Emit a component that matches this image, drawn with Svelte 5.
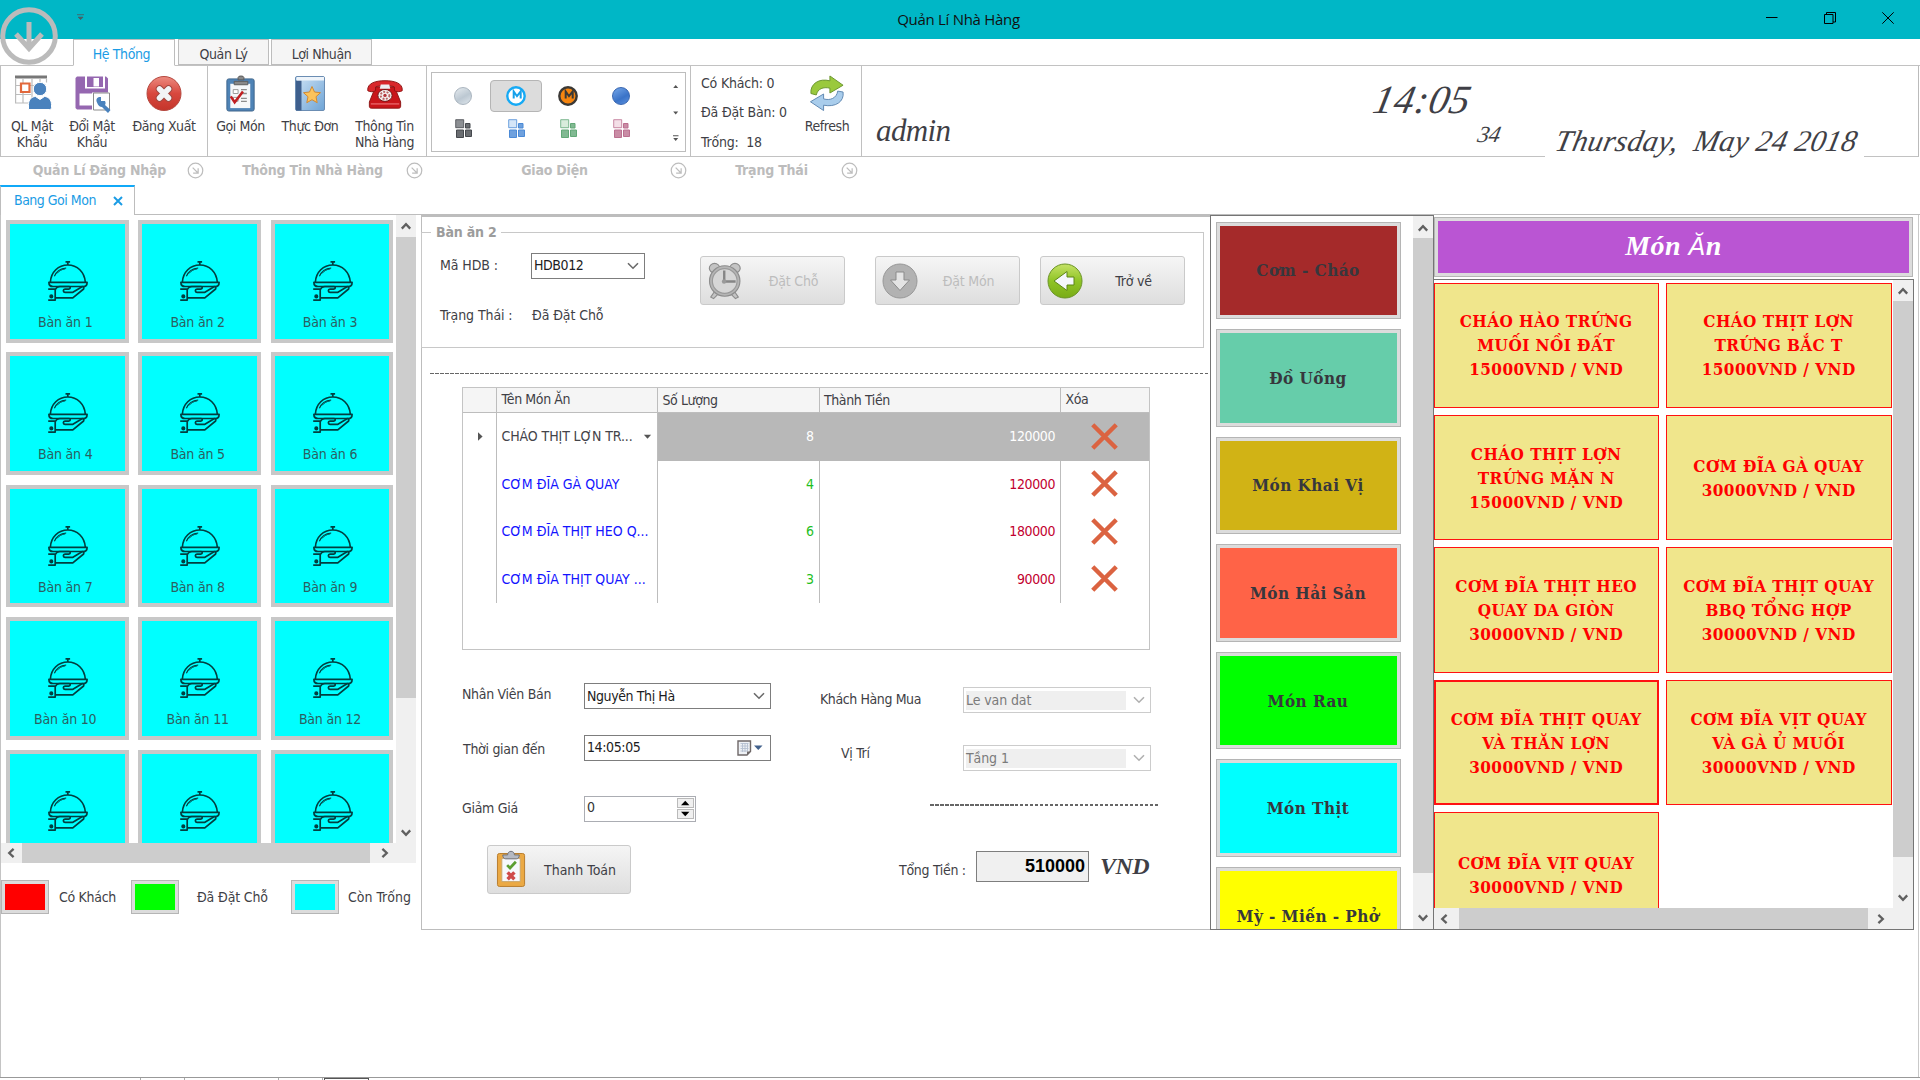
<script>
  // Tiles of the fifth row are only partly in view, so they carry no caption.
  const tables = Array.from({ length: 15 }, (_, i) => ({ n: i + 1, captioned: i < 12 }));

  const legend = [
    { tone: 'busy', label: 'Có Khách' },
    { tone: 'booked', label: 'Đã Đặt Chỗ' },
    { tone: 'free', label: 'Còn Trống' }
  ];

  const rows = [
    { name: 'CHÁO THỊT LỢN TR...', qty: 8, total: 120000, selected: true },
    { name: 'CƠM ĐĨA GÀ QUAY', qty: 4, total: 120000 },
    { name: 'CƠM ĐĨA THỊT HEO Q...', qty: 6, total: 180000 },
    { name: 'CƠM ĐĨA THỊT QUAY ...', qty: 3, total: 90000 }
  ];

  const categories = [
    { name: 'Cơm - Cháo', tone: 'brown' },
    { name: 'Đồ Uống', tone: 'mint' },
    { name: 'Món Khai Vị', tone: 'gold' },
    { name: 'Món Hải Sản', tone: 'tomato' },
    { name: 'Món Rau', tone: 'lime' },
    { name: 'Món Thịt', tone: 'aqua' },
    { name: 'Mỳ - Miến - Phở', tone: 'yellow' }
  ];

  const dishes = [
    { lines: ['CHÁO HÀO TRỨNG', 'MUỐI NỒI ĐẤT', '15000VND / VND'] },
    { lines: ['CHÁO THỊT LỢN', 'TRỨNG BẮC T', '15000VND / VND'] },
    { lines: ['CHÁO THỊT LỢN', 'TRỨNG MẶN N', '15000VND / VND'] },
    { lines: ['CƠM ĐĨA GÀ QUAY', '30000VND / VND'] },
    { lines: ['CƠM ĐĨA THỊT HEO', 'QUAY DA GIÒN', '30000VND / VND'] },
    { lines: ['CƠM ĐĨA THỊT QUAY', 'BBQ TỔNG HỢP', '30000VND / VND'] },
    { lines: ['CƠM ĐĨA THỊT QUAY', 'VÀ THĂN LỢN', '30000VND / VND'], focused: true },
    { lines: ['CƠM ĐĨA VỊT QUAY', 'VÀ GÀ Ủ MUỐI', '30000VND / VND'] },
    { lines: ['CƠM ĐĨA VỊT QUAY', '30000VND / VND'] }
  ];

  const palettes = [
    ['#8c8f93', '#45484d'],
    ['#d5e6f8', '#4b8ad6'],
    ['#d9ecdc', '#62a877'],
    ['#f3dfe7', '#bb6f8f']
  ];
</script>

{#snippet chevron(dir)}
  <svg class="chev {dir}" viewBox="0 0 12 12"><path d="M1.8 8.6 6 4.2l4.2 4.4" /></svg>
{/snippet}

{#snippet comboArrow()}
  <svg class="combo-arrow" viewBox="0 0 12 8"><path d="M1 1.2 6 6.2 11 1.2" /></svg>
{/snippet}

{#snippet launcher()}
  <svg class="launcher" viewBox="0 0 18 18">
    <circle cx="9" cy="9" r="7.7" />
    <path d="M6 6l5.4 5.4M11.8 6.5v5.3H6.5" />
  </svg>
{/snippet}

{#snippet dishIcon()}
  <svg class="serve" viewBox="0 0 40 40">
    <path d="M17.5.9h4.6M19.8 1v3" />
    <path d="M2.4 21C3 11 10.300 4 19.800 4S36.500 11 37.300 21" />
    <path d="M6.400 15.300C8.300 10.600 12.600 7.400 18.200 7" stroke-width="1.1" />
    <path d="M8.800 12.600c2-2.500 5-4.300 8.500-4.700" stroke-width=".9" />
    <path d="M.9 21.400h38.200c0 2.700-1.700 4.100-4.100 4.100H5C2.600 25.500.9 24.100.9 21.400z" />
    <path d="M.2 28.100h7v11h-7M7.200 36.800h17.600L35.600 28c.8-1.700-.1-2.600-1.600-2.300l-9.500 5.700h-7.500c-2.200-.2-2.200-3.200 0-3.300h3.700c2-.3 2.100-2.200.4-2.600H11.800c-2.200.2-3.700 1.300-4.600 3.200" />
    <circle cx="3.300" cy="35.400" r="1.200" />
  </svg>
{/snippet}

<div class="app">
  <header class="titlebar">
    <svg class="quick" viewBox="0 0 8 7"><path d="M0 .7h7M1.200 3.200h4.800L3.600 5.600z" /></svg>
    <span class="window-title">Quản Lí Nhà Hàng</span>
    <div class="window-buttons">
      <svg viewBox="0 0 12 12"><path d="M0 5.500h11.500" /></svg>
      <svg viewBox="0 0 12 12"><path d="M.5 2.500h8.500v9H.5zM2.500 2.500V.5h9v9.500H9" /></svg>
      <svg viewBox="0 0 12 12"><path d="M.3.3l11.400 11.400M11.700.3.3 11.700" /></svg>
    </div>
  </header>
  <svg class="app-button" viewBox="0 0 58 58">
    <circle cx="29" cy="29" r="26.300" />
    <path d="M29 15v27M16 27l13 14.500L42 27" />
  </svg>

  <nav class="tabs">
    <span class="tab active">Hệ Thống</span>
    <span class="tab second">Quản Lý</span>
    <span class="tab third">Lợi Nhuận</span>
  </nav>

  <section class="ribbon">
    <div class="group login">
      <div class="body">
        <button>
          <svg viewBox="0 0 36 36">
            <path d="M0 0h32v3H0z" fill="#777" />
            <path d="M.6 3v25M8 3v24M17 3v24M25 3v6M0 10h31M0 19h16M0 27.500h15M31.500 3v4" stroke="#bcbcbc" stroke-width="1.200" fill="none" />
            <path d="M6 8h8.500v8.500H6z" fill="#fff" stroke="#e2683c" stroke-width="2.200" />
            <circle cx="25" cy="13.500" r="6.700" fill="#4a82bd" stroke="#fff" />
            <path d="M13.500 34v-5c0-5 3.500-8 7-8l4.500 3 4.500-3c3.500 0 7 3 7 8v3c0 1.500-1 2-2 2z" fill="#4a82bd" stroke="#fff" />
          </svg>
          <span>QL Mật<br />Khẩu</span>
        </button>
        <button>
          <svg viewBox="0 0 36 36">
            <path d="M2 1h8v12h20V1h1l2 2v14H17v17H2L.5 32.500V2.500z" fill="#9567b0" />
            <path d="M12 1h16v10.500H12z" fill="#9567b0" />
            <path d="M18.500 2.500H24v8.500h-5.500z" fill="#fff" />
            <path d="M4.500 18h13v12h-13z" fill="#fff" />
            <path d="M18.500 17.500h16v17h-16z" fill="#fff" stroke="#8b8b8b" />
            <path d="M22 27c-1.500-3 0-6 4-5.500v4h4c1 2 .5 3 0 4l5.500 5-2.500 3-6-6c-2 0-4-1.500-5-4.500z" fill="#4a82bd" />
          </svg>
          <span>Đổi Mật<br />Khẩu</span>
        </button>
        <button>
          <svg viewBox="0 0 36 36">
            <defs>
              <linearGradient id="redball" x1="0" y1="0" x2="0" y2="1">
                <stop offset="0" stop-color="#ec8b80" /><stop offset=".5" stop-color="#d8483e" /><stop offset="1" stop-color="#c4352b" />
              </linearGradient>
            </defs>
            <circle cx="18" cy="18" r="17" fill="url(#redball)" stroke="#b5483f" />
            <path d="M13.500 13.500l9 9M22.500 13.500l-9 9" stroke="#a04840" stroke-width="7.500" stroke-linecap="round" />
            <path d="M13.500 13.500l9 9M22.500 13.500l-9 9" stroke="#f2f4f6" stroke-width="5.500" stroke-linecap="round" />
          </svg>
          <span>Đăng Xuất</span>
        </button>
      </div>
      <footer><b>Quản Lí Đăng Nhập</b>{@render launcher()}</footer>
    </div>

    <div class="group info">
      <div class="body">
        <button>
          <svg viewBox="0 0 36 38">
            <rect x="3.500" y="4" width="28" height="33" rx="2" fill="#4e83b6" stroke="#40668c" />
            <path d="M7 9h20.500v25H7z" fill="#f5f7f9" />
            <path d="M11 6.500h14v3.500H11zM15 5V2.500c0-2 6-2 6 0V5z" fill="#888" stroke="#5c5c5c" />
            <path d="M10 15h5v4h-5zM10 23h5v4h-5z" fill="#fff" stroke="#999" />
            <path d="M18 15h6M18 19h6M18 24h6M18 27h6" stroke="#8c8c8c" stroke-width="1.300" />
            <path d="M7.500 22l4 6L20 17" fill="none" stroke="#c01f22" stroke-width="2.600" />
          </svg>
          <span>Gọi Món</span>
        </button>
        <button>
          <svg viewBox="0 0 36 36">
            <defs>
              <linearGradient id="book" x1="0" y1="0" x2="1" y2="1">
                <stop offset="0" stop-color="#cfe3f5" /><stop offset="1" stop-color="#6ea4d6" />
              </linearGradient>
            </defs>
            <rect x="3.500" y="1" width="29" height="34" rx="1.500" fill="url(#book)" stroke="#6b8db3" />
            <path d="M4 5h5.500v30H4z" fill="#3e5f8d" />
            <path d="M5 1.500h27V5H5z" fill="#eef4fa" />
            <path d="M20 11l2.500 5.500 6 .7-4.500 4 1.200 6-5.200-3-5.200 3 1.200-6-4.500-4 6-.7z" fill="#fcc35c" stroke="#d08a34" />
          </svg>
          <span>Thực Đơn</span>
        </button>
        <button>
          <svg viewBox="0 0 38 36">
            <path d="M9 11h20l6.500 16v4.500c0 1.500-1 2-2 2h-29c-1 0-2-.5-2-2V27z" fill="#c9151a" stroke="#8c1414" />
            <path d="M.8 15C0 7 9 4.500 19 4.500S38 7 37.200 15c-2 1.500-6.500 1.500-8.200 0v-4c-3-1.500-17-1.500-20 0v4c-1.700 1.500-6.200 1.500-8.200 0z" fill="#d9272b" stroke="#8c1414" />
            <path d="M14.500 8.500h9l1 4.500h-11z" fill="#eceff2" />
            <ellipse cx="19" cy="20" rx="7.500" ry="6.300" fill="#f3f0f0" stroke="#701616" />
            <ellipse cx="19" cy="20" rx="4.600" ry="3.800" fill="none" stroke="#b66" stroke-width="2" stroke-dasharray="2 1.500" />
            <circle cx="19" cy="20" r="1.800" fill="#b4353a" />
            <path d="M4 29h30" stroke="#ef7577" stroke-width="1.200" />
          </svg>
          <span>Thông Tin<br />Nhà Hàng</span>
        </button>
      </div>
      <footer><b>Thông Tin Nhà Hàng</b>{@render launcher()}</footer>
    </div>

    <div class="group look">
      <div class="body">
        <div class="gallery">
          <div class="swatches">
            <span class="swatch"><i class="ball silver"></i></span>
            <span class="swatch chosen"><svg viewBox="0 0 20 20"><circle cx="10" cy="10" r="8.700" fill="#fff" stroke="#16aaf5" stroke-width="2.400" /><path d="M7.700 12.500V5.500l3.300 4.700 3.700-4.700v7" fill="none" stroke="#16a0ea" stroke-width="2" /></svg></span>
            <span class="swatch"><svg viewBox="0 0 20 20"><circle cx="10" cy="10" r="8.700" fill="#f6850f" stroke="#3b3936" stroke-width="2.400" /><path d="M7.700 12.500V5.500l3.300 4.700 3.700-4.700v7" fill="none" stroke="#3b3936" stroke-width="2" /></svg></span>
            <span class="swatch"><i class="ball blue"></i></span>
            {#each palettes as [light, dark]}
              <span class="swatch low">
                <svg viewBox="0 0 18 20">
                  <path d="M.7.7h8v8h-8z" fill={light} stroke={dark} stroke-width=".8" />
                  <path d="M10.500 4.500h4.500V9h-4.500zM1.500 11h7v7.500h-7zM10.500 11H16.500v6.500h-6z" fill={dark} stroke={dark} fill-opacity=".8" />
                </svg>
              </span>
            {/each}
          </div>
          <svg class="pager" viewBox="0 0 8 60">
            <path d="M1.200 5h5L3.700 2zM1.200 28.500h5l-2.500 3zM1.200 55h5l-2.500 3zM1 52.300h5.500v1H1z" />
          </svg>
        </div>
      </div>
      <footer><b>Giao Diện</b>{@render launcher()}</footer>
    </div>

    <div class="group state">
      <div class="body">
        <ul>
          <li>Có Khách: 0</li>
          <li>Đã Đặt Bàn: 0</li>
          <li>Trống:&nbsp; 18</li>
        </ul>
        <button>
          <svg viewBox="0 0 36 38">
            <path d="M1.500 19C.5 9 10 3 21 6V1l13.500 9.500L21 18.500v-5C14 12 8.500 14 7 20.500z" fill="#9ac93d" stroke="#6b9630" />
            <path d="M34.500 17.500c1.500 10-8 16-20 13.500v5.500L1 27.500l13.500-8v5C21 26.500 28 24 29 16.500z" fill="#a9cdec" stroke="#6189b2" />
          </svg>
          <span>Refresh</span>
        </button>
      </div>
      <footer><b>Trạng Thái</b>{@render launcher()}</footer>
    </div>

    <div class="group clock">
      <div class="body">
        <span class="user">admin</span>
        <span class="time"><span>14:05</span></span>
        <span class="seconds"><span>34</span></span>
        <span class="date"><span>Thursday,&nbsp; May 24 2018</span></span>
      </div>
      <footer></footer>
    </div>
  </section>

  <div class="doc-tabs">
    <span class="doc-tab">Bang Goi Mon
      <svg viewBox="0 0 10 10"><path d="M1 1l8 8M9 1 1 9" /></svg>
    </span>
  </div>

  <main>
    <section class="floor">
      <div class="floor-view">
        <div class="table-grid">
          {#each tables as table}
            <button class="table-tile">
              {@render dishIcon()}
              {#if table.captioned}<span>Bàn ăn {table.n}</span>{/if}
            </button>
          {/each}
        </div>
        <div class="vbar floor-v">
          {@render chevron('up')}
          <i></i>
          {@render chevron('down')}
        </div>
        <div class="hbar floor-h">
          {@render chevron('left')}
          <i></i>
          {@render chevron('right')}
        </div>
        <div class="bar-corner"></div>
      </div>
      <div class="legend">
        {#each legend as item}
          <span class="key {item.tone}"></span>
          <span class="key-label">{item.label}</span>
        {/each}
      </div>
    </section>

    <section class="order">
      <fieldset>
        <legend>Bàn ăn 2</legend>
        <dl>
          <dt>Mã HDB :</dt>
          <dd><div class="combo">HDB012{@render comboArrow()}</div></dd>
          <dt>Trạng Thái :</dt>
          <dd class="plain">Đã Đặt Chỗ</dd>
        </dl>
        <div class="actions">
          <button class="btn off">
            <svg viewBox="0 0 36 40">
              <g fill="#c4c4c4" stroke="#8d8d8d" stroke-width="1.200">
                <path d="M7 31l-4 6 3 1.500 5-5zM28 31l4 6-3 1.500-5-5z" />
                <ellipse cx="7" cy="6.500" rx="5.500" ry="5" /><ellipse cx="28.500" cy="6.500" rx="5.500" ry="5" />
                <circle cx="17.700" cy="20" r="16" fill="#b5b5b5" /><circle cx="17.700" cy="20" r="13" fill="#d6d6d6" stroke="#9a9a9a" />
              </g>
              <path d="M17.200 9v11.500h12" fill="none" stroke="#858585" stroke-width="2.500" /><circle cx="17" cy="20.500" r="2.300" fill="#999" />
            </svg>
            <span>Đặt Chỗ</span>
          </button>
          <button class="btn off mid">
            <svg viewBox="0 0 36 36">
              <circle cx="18" cy="18" r="17" fill="#b2b2b2" stroke="#989898" />
              <path d="M14 9h8v8h5.500L18 27.500 8.500 17H14z" fill="#e4e4e4" stroke="#8b8b8b" />
            </svg>
            <span>Đặt Món</span>
          </button>
          <button class="btn last">
            <svg viewBox="0 0 36 36">
              <defs>
                <linearGradient id="green" x1="0" y1="0" x2="0" y2="1">
                  <stop offset="0" stop-color="#c5e267" /><stop offset=".5" stop-color="#8fc425" /><stop offset="1" stop-color="#79ac17" />
                </linearGradient>
              </defs>
              <circle cx="18" cy="18" r="17" fill="url(#green)" stroke="#6b9428" />
              <path d="M27 14v8h-7v5.500L7 18 20 8.500V14z" fill="#f4f7fb" stroke="#5c8615" />
            </svg>
            <span>Trở về</span>
          </button>
        </div>
      </fieldset>

      <div class="dashes wide"></div>

      <div class="grid">
        <div class="row head">
          <span></span><span>Tên Món Ăn</span><span class="low">Số Lượng</span><span class="low">Thành Tiền</span><span>Xóa</span>
        </div>
        {#each rows as row}
          <div class="row" class:selected={row.selected}>
            <span class="mark">{#if row.selected}<svg viewBox="0 0 6 10"><path d="M0 0v10l5.500-5z" /></svg>{/if}</span>
            <span class="name">{row.name}{#if row.selected}<svg viewBox="0 0 10 6"><path d="M1 .5h8L5 5z" /></svg>{/if}</span>
            <span class="qty">{row.qty}</span>
            <span class="sum">{row.total}</span>
            <span class="del"><svg viewBox="0 0 28 28"><path d="M1.800 1.800 26.200 26.200M26.200 1.800 1.800 26.200" /></svg></span>
          </div>
        {/each}
      </div>

      <div class="forms">
        <div class="form-left">
          <div class="field seller">
            <span class="caption">Nhân Viên Bán</span>
            <div class="combo">Nguyễn Thị Hà{@render comboArrow()}</div>
          </div>
          <div class="field arrival">
            <span class="caption">Thời gian đến</span>
            <div class="combo">14:05:05
              <svg class="calendar" viewBox="0 0 26 16">
                <path d="M1 1h12.500v10.500l-3.500 3.500H1z" fill="#eef1f5" stroke="#6f6868" stroke-width="1.400" />
                <path d="M3.500 3.500h8M3.500 6h8M3.500 8.500h8M3.500 11h7M5.500 3v9M8 3v9M10.500 3v8" stroke="#b4bfd0" stroke-width=".9" />
                <path d="M10 15v-3.500h3.500z" fill="#706a6a" />
                <path d="M17 5.500h8.500L21.300 10z" fill="#42618c" />
              </svg>
            </div>
          </div>
          <div class="field discount">
            <span class="caption">Giảm Giá</span>
            <div class="spin">0
              <div class="spinner">
                <svg viewBox="0 0 8 5"><path d="M0 4.500h7.500L3.800.5z" /></svg>
                <svg viewBox="0 0 8 5"><path d="M0 .5h7.500L3.800 4.500z" /></svg>
              </div>
            </div>
          </div>
          <button class="btn pay">
            <svg viewBox="0 0 32 38">
              <rect x="1.500" y="3" width="28" height="34" rx="2" fill="#eba944" stroke="#b77c2c" />
              <path d="M6 8h19v24H6z" fill="#f6f8fc" stroke="#c9a56a" />
              <path d="M7 4.500h5c0-5 7-5 7 0h5c0 3-1.500 4-3 4H10c-1.500 0-3-1-3-4z" fill="#b5b9c2" stroke="#6e727a" />
              <path d="M11.500 15l3 3 6-6.500" fill="none" stroke="#5b9e32" stroke-width="2.800" />
              <path d="M12 22.500l7 7M19 22.500l-7 7" stroke="#cf4a4a" stroke-width="3.600" />
            </svg>
            <span>Thanh Toán</span>
          </button>
        </div>

        <div class="form-right">
          <div class="field customer">
            <span class="caption">Khách Hàng Mua</span>
            <div class="combo locked"><span>Le van dat</span>{@render comboArrow()}</div>
          </div>
          <div class="field place">
            <span class="caption">Vị Trí</span>
            <div class="combo locked"><span>Tầng 1</span>{@render comboArrow()}</div>
          </div>
          <div class="dashes short"></div>
          <div class="field total">
            <span class="caption">Tổng Tiền :</span>
            <output>510000</output>
            <em>VND</em>
          </div>
        </div>
      </div>
    </section>

    <section class="categories">
      <div class="cat-list">
        {#each categories as cat}
          <button class="cat {cat.tone}">{cat.name}</button>
        {/each}
      </div>
      <div class="vbar cat-v">
        {@render chevron('up')}
        <i></i>
        {@render chevron('down')}
      </div>
    </section>

    <section class="menu">
      <h2>Món <span>Ă</span>n</h2>
      <div class="menu-view">
        <div class="dishes">
          {#each dishes as dish}
            <button class="dish" class:focused={dish.focused}>
              {#each dish.lines as line}<span>{line}</span>{/each}
            </button>
          {/each}
        </div>
        <div class="vbar menu-v">
          {@render chevron('up')}
          <i></i>
          {@render chevron('down')}
        </div>
        <div class="hbar menu-h">
          {@render chevron('left')}
          <i></i>
          {@render chevron('right')}
        </div>
        <div class="bar-corner"></div>
      </div>
    </section>
  </main>

  <footer class="bottom"><i class="b1"></i><i class="b2"></i><i class="b3"></i></footer>
</div>

<style>
  :global(body) { background: #fff; overflow: hidden; }
  * { box-sizing: border-box; }
  .app {
    position: relative;
    display: flex;
    flex-direction: column;
    width: 1920px;
    height: 1080px;
    overflow: hidden;
    background: #fff;
    color: #3f3f46;
    font: 14px/17px "DejaVu Sans Condensed", "DejaVu Sans", sans-serif;
    letter-spacing: -0.400px;
    white-space: nowrap;
  }
  button { font: inherit; letter-spacing: inherit; color: inherit; border: 0; margin: 0; padding: 0; background: none; }
  svg { display: block; flex: none; overflow: visible; }

  .titlebar { display: grid; grid-template-columns: 1fr auto 1fr; align-items: center; height: 38.500px; background: #00b7c6; color: #111; }
  .quick { width: 8px; height: 7px; margin-left: 77px; margin-top: -3px; fill: #4a5c60; stroke: #4a5c60; stroke-width: .8; }
  .window-title { font: 15px/18px "Open Sans", sans-serif; letter-spacing: -0.300px; margin-left: -3px; }
  .window-buttons { display: flex; justify-content: flex-end; gap: 46px; padding-right: 26px; margin-top: -2px; }
  .window-buttons svg { width: 12px; height: 12px; fill: none; stroke: #000; stroke-width: 1; }
  .app-button { position: absolute; left: 0; top: 7px; width: 58px; height: 58px; fill: none; stroke: #bbb; stroke-width: 5; }

  .tabs { display: flex; gap: 3px; height: 27px; padding-left: 73px; border-bottom: 1px solid #c2c2c2; }
  .tab { width: 91px; height: 26.500px; padding-top: 6px; text-align: center; background: #f5f5f5; border: 1px solid #bdbdbd; }
  .tab.active { width: 102px; height: 27px; padding-right: 5px; background: #fff; border-bottom-color: #fff; color: #1b9ce5; }
  .tab.third { width: 101px; margin-left: -1px; }

  .ribbon { display: flex; height: 119px; }
  .group { display: flex; flex: none; flex-direction: column; }
  .body { display: flex; height: 91.500px; border-left: 1px solid #c0c0c0; border-bottom: 1.500px solid #c2c2c2; }
  .group button { display: flex; flex-direction: column; align-items: center; text-align: center; line-height: 16.300px; padding-top: 9px; gap: 6.500px; }
  .group button svg { width: 36px; height: 37px; }
  .group footer { flex: 1; display: flex; align-items: center; justify-content: space-between; padding-right: 3px; color: #bcbcbc; font-size: 14px; letter-spacing: -0.200px; }
  .group footer b { flex: 1; text-align: center; }
  .launcher { width: 17px; height: 17px; fill: none; stroke: #bdbdbd; stroke-width: 1.300; }
  .group.login { width: 207px; }
  .login .body { padding-left: 1px; }
  .login button { width: 60px; }
  .login button svg { margin-left: 2px; }
  .login button:last-child { width: 84px; }
  .login button:last-child svg { margin-left: 0; }
  .login footer b { padding-left: 12px; }
  .info { width: 219px; }
  .info button { width: 65px; }
  .info button + button { width: 74px; }
  .info button:last-child { width: 75px; }
  .info footer b { padding-left: 12px; }
  .look { width: 264px; }
  .look footer b { padding-left: 13px; }
  .gallery { display: flex; justify-content: space-between; width: 255px; height: 80px; margin: 6px 0 0 4px; padding: 7px 4px 0 5px; border: 1px solid #bdbdbd; }
  .swatches { display: grid; grid-template-columns: repeat(4, 52.500px); grid-auto-rows: 32px; }
  .swatch { display: grid; place-items: center; }
  .swatch svg { width: 20px; height: 20px; }
  .swatch.low { padding: 2px 0 0 2px; }
  .chosen { background: #dcdcdc; border: 1px solid #b5b5b5; border-radius: 4px; }
  .ball { width: 18px; height: 18px; border-radius: 50%; }
  .silver { background: linear-gradient(150deg, #e6ebef, #bcc8d2 55%, #dfe6ec); border: 1px solid #aab5bf; }
  .blue { background: linear-gradient(150deg, #75a7e8, #3a73c8 60%, #5a90dd); border: 1px solid #3765b0; }
  .pager { width: 8px; height: 60px; fill: #555; margin: 3px 1px 0 0; }
  .state { width: 171px; }
  .state ul { list-style: none; margin: -5px 0 0; padding: 8px 0 0 10px; width: 106px; line-height: 29.500px; letter-spacing: -0.200px; }
  .state button { width: 60px; }
  .state footer b { padding-left: 12px; }
  .clock { width: 1059px; }
  .clock .body { border-right: 1px solid #bbb; font-family: "Liberation Serif", serif; font-style: italic; align-items: flex-start; margin-right: 1px; }
  .clock .body > span { flex: none; }
  .clock .body > span > span { display: inline-block; transform: skewX(-12deg); }
  .user { font-size: 31px; line-height: 36px; width: 466px; padding: 47px 0 0 14px; letter-spacing: -0.600px; }
  .time { font-size: 40px; line-height: 44px; padding: 12px 0 0 46px; width: 147px; letter-spacing: 0.700px; }
  .seconds { font-size: 23px; line-height: 26px; padding: 56px 0 0 3px; width: 70px; letter-spacing: -0.500px; }
  .date { font-size: 30px; line-height: 38px; height: 38px; margin-top: 56px; background: #fff; width: 319px; text-align: center; letter-spacing: 0.400px; padding-left: 5px; }

  .doc-tabs { display: flex; height: 30.500px; border-bottom: 1px solid #bdbdbd; }
  .doc-tab { display: flex; align-items: center; justify-content: space-between; width: 135px; height: 30.500px; padding: 0 11px 0 13px; border: 1px solid #bdbdbd; border-top: 2.500px solid #10a9f8; border-bottom: 0; color: #1b9ce5; background: #fff; letter-spacing: -0.500px; }
  .doc-tab svg { width: 10px; height: 10px; stroke: #1b9ce5; stroke-width: 2; }

  main { display: flex; flex: 1; border-left: 1px solid #c4c4c4; border-right: 1px solid #c9c9c9; margin-right: 1px; align-items: flex-start; }

  .vbar, .hbar { display: flex; align-items: center; background: #f0f0f0; }
  .vbar { flex-direction: column; }
  .vbar i, .hbar i { display: block; background: #cdcdcd; }
  .vbar i { width: 100%; }
  .hbar i { height: 100%; }
  .chev { width: 12px; height: 12px; fill: none; stroke: #606060; stroke-width: 2.300; }
  .chev.down { transform: rotate(180deg); }
  .chev.left { transform: rotate(-90deg); }
  .chev.right { transform: rotate(90deg); }
  .bar-corner { background: #f0f0f0; }

  .floor { width: 420px; }
  .floor-view { display: grid; grid-template: 628px 20px / 395px 20px; }
  .table-grid { display: grid; grid-template-columns: repeat(3, 122.500px); grid-auto-rows: 122.500px; gap: 9.900px; padding: 5px 0 0 5px; overflow: hidden; }
  .table-tile { display: flex; flex-direction: column; align-items: center; background: #0ff; border: 4px solid #c8c8c8; color: #2b5f62; padding: 37px 4px 0 0; gap: 13px; letter-spacing: -0.200px; }
  .serve { width: 40px; height: 40px; margin-left: 5px; fill: none; stroke: #023f40; stroke-width: 1.700; stroke-linejoin: round; }
  .serve circle { fill: #023f40; }
  .floor-v { padding-top: 5px; }
  .floor-v i { height: 461px; margin: 5px 0 129px; }
  .floor-h { padding-left: 4px; }
  .floor-h i { width: 348px; margin: 0 9px 0 5px; }
  .legend { display: flex; align-items: center; padding-top: 17px; }
  .key { width: 48px; height: 34px; border: 1px solid #b5b5b5; padding: 3px; background-clip: content-box; box-shadow: inset 0 0 0 3px #dcdcdc; }
  .busy { background-color: #f00; }
  .booked { background-color: #0f0; }
  .free { background-color: #0ff; }
  .key-label { padding: 1px 0 0 10px; width: 82px; letter-spacing: -0.300px; }
  .booked + .key-label { width: 112px; padding-left: 18px; letter-spacing: -0.150px; }
  .free + .key-label { padding-left: 9px; letter-spacing: 0; }

  .order { width: 789px; height: 715px; border: 1px solid #bdbdbd; border-top: 2px solid #bdbdbd; border-right: 0; }
  fieldset { display: flex; width: 783px; height: 124px; margin: 7px 0 0 -1px; padding: 0; border: 1px solid #c8c8c8; }
  fieldset legend { margin-left: 9px; padding: 0 5px; color: #9c9c9c; font-weight: bold; letter-spacing: -0.200px; }
  dl { display: grid; grid-template-columns: 91px 1fr; grid-template-rows: 26px 1fr; width: 260px; margin: 11.500px 0 0 18px; align-items: center; letter-spacing: -0.100px; }
  dd { margin: 0; }
  dt:nth-of-type(2), .plain { align-self: start; padding-top: 28.500px; }
  .combo { display: flex; align-items: center; justify-content: space-between; height: 26px; padding: 0 5px 0 2px; border: 1px solid #7d7d7d; color: #1c1c22; letter-spacing: -0.400px; }
  dd .combo { width: 114px; }
  .plain { padding-left: 1px; }
  .combo-arrow { width: 12px; height: 8px; fill: none; stroke: #6a6a6a; stroke-width: 1.600; }
  .actions { display: flex; align-items: flex-start; margin-top: 15px; }
  .btn { display: flex; align-items: center; width: 145px; height: 49px; border: 1px solid #cacaca; border-radius: 3px; background: linear-gradient(#f5f5f5, #dedede); letter-spacing: -0.200px; }
  .btn svg { width: 36px; height: 38px; margin-left: 6px; }
  .btn span { flex: 1; text-align: center; padding-top: 2px; }
  .btn.off { color: #bdbdbd; }
  .btn.mid { margin-left: 30px; }
  .btn.last { margin-left: 20px; }

  .dashes { height: 1.500px; background: repeating-linear-gradient(90deg, #666 0 3.500px, #fff 3.500px 5px); }
  .wide { width: 780px; margin: 24.500px 0 12.500px 8px; }
  .grid { width: 688px; height: 263px; margin-left: 40px; border: 1px solid #c4c4c4; }
  .row { display: grid; grid-template-columns: 34px 161px 161.500px 241.500px 1fr; height: 47.500px; }
  .row > span { display: flex; align-items: center; border-right: 1px solid #bdbdbd; padding: 0 5px 0 4.500px; }
  .row > span:last-child { border-right: 0; }
  .head { height: 25.500px; background: #f5f5f5; border-bottom: 1px solid #bdbdbd; }
  .head > span { padding-bottom: 1px; }
  .head > .low { padding-top: 1px; padding-bottom: 0; }
  .row .mark { justify-content: flex-end; padding-right: 13px; }
  .mark svg { width: 5px; height: 9px; fill: #555; }
  .row .name { justify-content: space-between; color: #1414ff; letter-spacing: 0; }
  .name svg { width: 9px; height: 6px; fill: #555; }
  .row .qty, .row .sum { justify-content: flex-end; color: #1fc01f; }
  .row .sum { color: #c2002f; }
  .row .del { justify-content: center; }
  .del svg { width: 27px; height: 27px; stroke: #db6341; stroke-width: 4.600; margin-top: -1px; }
  .row.selected .name { color: #44444a; letter-spacing: -0.100px; }
  .row.selected .qty, .row.selected .sum, .row.selected .del { background: #b8b8b8; color: #fff; border-color: #b8b8b8; }

  .forms { display: flex; }
  .form-left { width: 349px; padding: 33.500px 0 0 40px; }
  .form-left .field { display: flex; justify-content: space-between; }
  .form-left .combo { width: 187px; }
  .caption { padding-top: 3px; letter-spacing: -0.300px; }
  .arrival { margin-top: 25.500px; }
  .arrival .caption { padding: 6px 0 0 1px; }
  .calendar { width: 26px; height: 16px; margin-right: 2px; }
  .discount { margin-top: 35px; }
  .discount .caption { padding-top: 4px; }
  .form-left .spin { display: flex; justify-content: space-between; width: 112px; height: 26px; margin-right: 75px; padding: 2px 1px 3px 2px; border: 1px solid #abadb3; color: #333; line-height: 17px; }
  .spinner { display: grid; grid-template-rows: 1fr 1fr; gap: 1px; width: 17px; margin-top: -1px; height: 21px; }
  .spinner svg { width: 100%; height: 10px; padding: 1px 3px; background: #f0f0f0; border: 1px solid #bababa; }
  .pay { width: 144px; margin: 23px 0 0 25px; letter-spacing: 0; }
  .pay svg { width: 31px; height: 38px; margin-left: 8px; }
  .pay span { padding-left: 3px; }

  .form-right { padding-top: 37.500px; width: 438px; }
  .form-right .field { display: flex; }
  .form-right .combo { width: 188px; }
  .customer .caption { width: 192px; padding: 4px 0 0 49px; letter-spacing: -0.400px; }
  .place { margin-top: 32px; }
  .place .caption { width: 192px; padding-left: 70px; padding-top: 0; }
  .form-right .combo.locked { border-color: #ccc; color: #7b7b7b; padding-left: 2px; }
  .locked span { width: 160px; height: 19px; background: #efefef; line-height: 18px; letter-spacing: -0.100px; }
  .locked .combo-arrow { stroke: #b0b0b0; margin: 0; }
  .short { width: 230px; margin: 33px 0 0 159px; }
  .form-right .total { margin-top: 45.500px; padding-left: 128px; }
  .total .caption { width: 77px; padding-top: 11px; }
  output { width: 113px; height: 31px; padding-right: 3px; border: 1px solid #7e7e7e; background: #f0f0f0; font: bold 18px/28px "Liberation Sans", sans-serif; color: #000; text-align: right; letter-spacing: 0; }
  .total em { margin-left: 11px; font: italic bold 24px/31px "Liberation Serif", serif; letter-spacing: -0.500px; }

  .categories { display: flex; width: 224px; height: 715px; border: 1px solid #757575; overflow: hidden; }
  .cat-list { display: flex; flex-direction: column; gap: 10px; width: 202px; padding: 5.500px 0 0 5px; }
  .cat { flex: none; width: 185px; height: 97.600px; border: 1px solid #b5b5b5; box-shadow: inset 0 0 0 3px #dcdcdc; color: #37373d; padding: 0 1px 0 0; }
  .cat, .dish { font: bold 17px/24px "DejaVu Serif Condensed", "DejaVu Serif", serif; letter-spacing: 0.450px; }
  .brown { background: #a52a2a; }
  .mint { background: #66cdaa; }
  .gold { background: #d1b315; }
  .tomato { background: #ff6347; }
  .lime { background: #0f0; }
  .aqua { background: #0ff; }
  .yellow { background: #ff0; }
  .vbar.cat-v { width: 20px; padding-top: 6px; }
  .cat-v i { height: 635px; margin: 4px 0 39px; }

  .menu { width: 480px; }
  h2 { width: 479px; height: 60px; margin: 1.500px 0 2px; border: 1px solid #b5b5b5; box-shadow: inset 0 0 0 3px #dcdcdc; background: #ba55d3; color: #fff; font: italic bold 28px/55px "Liberation Serif", serif; letter-spacing: 0.500px; text-align: center; }
  h2 span { font-weight: normal; font-family: "Liberation Sans", sans-serif; font-size: 25px; }
  .menu-view { display: grid; grid-template: 628.500px 21px / 458.500px 20px; border: 1px solid #757575; border-left: 0; width: 480px; height: 651.500px; }
  .dishes { display: grid; grid-template-columns: repeat(2, 225.300px); grid-auto-rows: 125.300px; gap: 7.200px; padding-top: 3px; overflow: hidden; }
  .dish { display: flex; flex-direction: column; justify-content: center; align-items: center; background: #f0e68c; border: 1px solid #f11; color: #f00; padding-right: 1px; }
  .dish.focused { border-width: 2px; }
  .menu-v { padding-top: 5px; }
  .menu-v i { height: 556px; margin: 4px 0 35px; }
  .menu-h { padding-left: 4px; }
  .menu-h i { width: 409px; margin: 0 7px 0 9px; }

  .bottom { display: flex; height: 3px; border-top: 1.500px solid #999; }
  .bottom i { height: 2px; width: 45px; border: 1px solid #aaa; border-width: 0 1px; }
  .b1 { margin-left: 140px; }
  .b2 { margin-left: 93px; }
  .bottom .b3 { border: 1px solid #555; border-bottom: 0; margin-left: 1px; }
</style>
